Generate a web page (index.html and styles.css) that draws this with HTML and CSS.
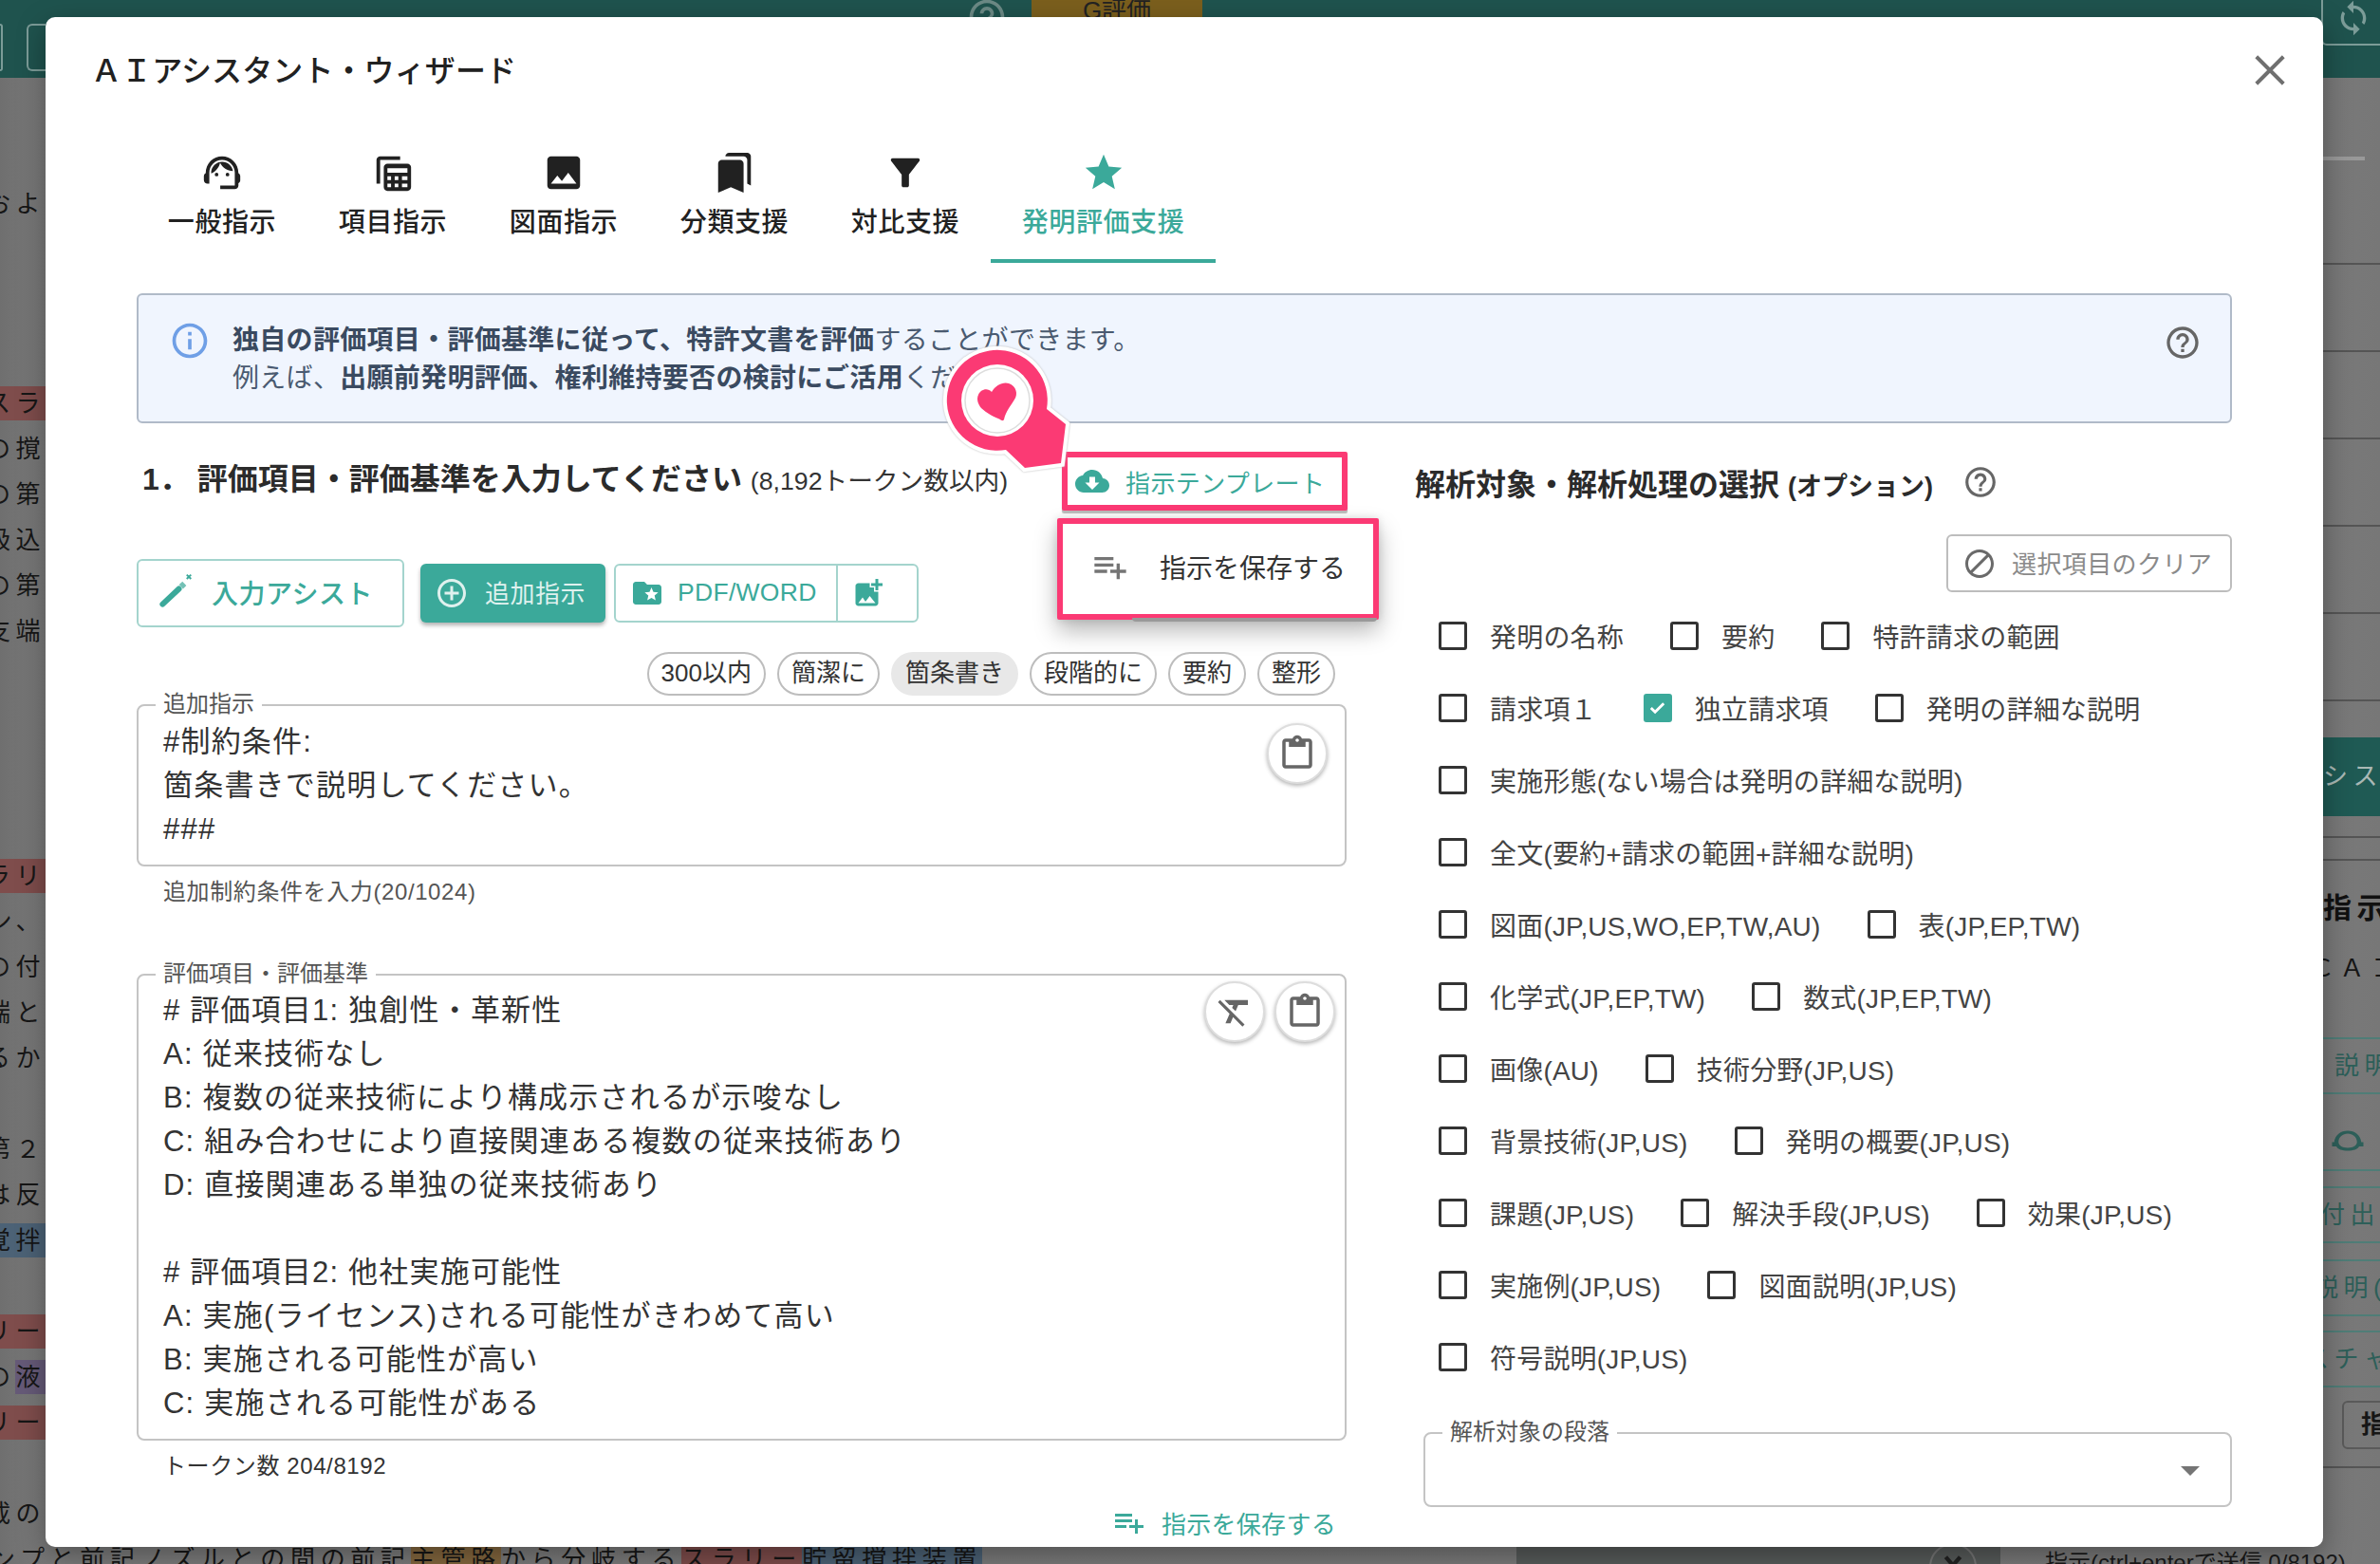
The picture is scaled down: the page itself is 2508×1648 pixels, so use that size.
FILE: index.html
```html
<!DOCTYPE html>
<html lang="ja">

<head>
    <meta charset="UTF-8" />
    <title>AIアシスタント・ウィザード</title>
    <link rel="stylesheet" href="styles.css">
</head>

<body>

    <!-- page behind the dialog -->
    <div class="page">
        <div class="topbar">
            <div class="top-left">
                <span class="top-box"></span>
                <span class="top-box second"></span>
            </div>
            <div class="top-mid">
                <svg class="top-help" viewBox="0 0 24 24"><use href="#i-help" /></svg>
                <span class="top-tag">G評価</span>
            </div>
            <div class="top-right">
                <svg class="top-sync" viewBox="0 0 24 24"><path d="M12 4V1L8 5l4 4V6c3.31 0 6 2.69 6 6 0 1.01-.25 1.97-.7 2.8l1.46 1.46C19.54 15.03 20 13.57 20 12c0-4.42-3.58-8-8-8zm0 14c-3.31 0-6-2.69-6-6 0-1.01.25-1.97.7-2.8L5.24 7.74C4.46 8.97 4 10.43 4 12c0 4.42 3.58 8 8 8v3l4-4-4-4v3z" /></svg>
            </div>
        </div>
        <div class="under">
            <div class="left-text">
                <div class="ln first">およ</div>
                <div class="ln gap-a"><span class="hl-red">スラ</span></div>
                <div class="ln">の撹</div>
                <div class="ln">の第</div>
                <div class="ln">吸込</div>
                <div class="ln">の第</div>
                <div class="ln">支端</div>
                <div class="ln gap-b"><span class="hl-red">ラリ</span></div>
                <div class="ln">ン、</div>
                <div class="ln">の付</div>
                <div class="ln">端と</div>
                <div class="ln">るか</div>
                <div class="ln gap-c">第２</div>
                <div class="ln">は反</div>
                <div class="ln"><span class="hl-blue">覚拌</span></div>
                <div class="ln gap-c"><span class="hl-red">リー</span></div>
                <div class="ln">の<span class="hl-purple">液</span></div>
                <div class="ln"><span class="hl-red">リー</span></div>
                <div class="ln gap-c">載の</div>
                <div class="ln bottom-line">ンプと前記ノズルとの間の前記<span class="hl-orange">主管路</span>から分岐する<span class="hl-red">スラリー</span><span class="hl-blue">貯留撹拌装置</span></div>
            </div>
            <div class="right-text">
                <div class="rule r-short"></div>
                <div class="rule r-first"></div>
                <div class="rule r-92"></div>
                <div class="rule r-92"></div>
                <div class="rule r-92"></div>
                <div class="rule r-92"></div>
                <div class="rule r-92"></div>
                <div class="assist-bar">システム</div>
                <div class="rule r-21"></div>
                <div class="rule r-24"></div>
                <div class="r-title">指示で</div>
                <div class="r-sub">ＣＡＩ</div>
                <div class="r-cell c-a">説明</div>
                <div class="r-cell-icon">
                    <svg viewBox="0 0 24 24"><path d="M12 5C7 5 3 8 2.500 13H1v3h3c1 2 4 3 8 3s7-1 8-3h3v-3h-1.500C21 8 17 5 12 5zm0 2c3.500 0 6.500 2.300 6.500 6 0 2-2.500 4-6.500 4s-6.500-2-6.500-4c0-3.700 3-6 6.500-6z" /></svg>
                </div>
                <div class="r-cell c-b">付出力</div>
                <div class="r-cell c-c">説明(日</div>
                <div class="r-cell c-d">スチャ</div>
                <div class="r-btn">指</div>
                <div class="rule r-last"></div>
            </div>
        </div>
        <div class="page-foot">
            <div class="foot-dark"><span class="foot-circle"><svg viewBox="0 0 24 24"><path d="M5 8l7 8 7-8" /></svg></span></div>
            <div class="foot-hint">指示(ctrl+enterで送信 0/8192)</div>
        </div>
    </div>

    <!-- dialog -->
    <div class="modal">
        <div class="modal-title">ＡＩアシスタント・ウィザード</div>
        <svg class="close" viewBox="0 0 24 24"><path d="M3 3l18 18M21 3L3 21" /></svg>

        <div class="tabs">
            <div class="tab">
                <svg viewBox="0 0 24 24"><path d="M21 12.220C21 6.730 16.740 3 12 3c-4.690 0-9 3.650-9 9.280-.6.340-1 .98-1 1.720v2c0 1.100.9 2 2 2h1v-6.100c0-3.870 3.130-7 7-7s7 3.130 7 7V19h-8v2h8c1.100 0 2-.9 2-2v-1.220c.59-.31 1-.92 1-1.640v-2.300c0-.7-.41-1.310-1-1.620z" /><circle cx="9" cy="13" r="1" /><circle cx="15" cy="13" r="1" /><path d="M18 11.030C17.520 8.180 15.040 6 12.050 6c-3.030 0-6.290 2.510-6.030 6.450 2.470-1.010 4.330-3.210 4.860-5.890 1.310 2.630 4 4.440 7.120 4.470z" /></svg>
                <span>一般指示</span>
            </div>
            <div class="tab">
                <svg viewBox="0 0 24 24"><path d="M3 3h13v2H5v13H3V5c0-1.100.9-2 2-2z" /><path fill-rule="evenodd" d="M9 7h11c1.100 0 2 .9 2 2v11c0 1.100-.9 2-2 2H9c-1.100 0-2-.9-2-2V9c0-1.100.9-2 2-2zm0 2.500v2.500h11V9.500H9zM9 14v2h2v-2H9zm4 0v2h2v-2h-2zm4 0v2h3v-2h-3zM9 18v2h2v-2H9zm4 0v2h2v-2h-2zm4 0v2h3v-2h-3z" /></svg>
                <span>項目指示</span>
            </div>
            <div class="tab">
                <svg viewBox="0 0 24 24"><path d="M21 19V5c0-1.100-.9-2-2-2H5c-1.100 0-2 .9-2 2v14c0 1.100.9 2 2 2h14c1.100 0 2-.9 2-2zM8.500 13.500l2.500 3.010L14.500 12l4.500 6H5l3.500-4.500z" /></svg>
                <span>図面指示</span>
            </div>
            <div class="tab">
                <svg viewBox="0 0 24 24"><path d="M19 18l2 1V3c0-1.100-.9-2-2-2H8.990C7.890 1 7 1.900 7 3h10c1.100 0 2 .9 2 2v13zM15 5H5c-1.100 0-2 .9-2 2v16l7-3 7 3V7c0-1.100-.9-2-2-2z" /></svg>
                <span>分類支援</span>
            </div>
            <div class="tab">
                <svg viewBox="0 0 24 24"><path d="M4.250 5.610C6.270 8.200 10 13 10 13v6c0 .55.45 1 1 1h2c.55 0 1-.45 1-1v-6s3.720-4.800 5.740-7.390c.51-.66.04-1.610-.79-1.610H5.040c-.83 0-1.300.95-.79 1.610z" /></svg>
                <span>対比支援</span>
            </div>
            <div class="tab active">
                <svg viewBox="0 0 24 24"><path d="M12 17.270L18.180 21l-1.640-7.030L22 9.240l-7.190-.61L12 2 9.190 8.630 2 9.240l5.460 4.730L5.820 21z" /></svg>
                <span>発明評価支援</span>
            </div>
        </div>

        <div class="modal-body">
            <div class="info">
                <svg class="info-icon" viewBox="0 0 24 24"><path d="M11 7h2v2h-2zm0 4h2v6h-2zm1-9C6.480 2 2 6.480 2 12s4.480 10 10 10 10-4.480 10-10S17.520 2 12 2zm0 18c-4.410 0-8-3.590-8-8s3.590-8 8-8 8 3.590 8 8-3.590 8-8 8z" /></svg>
                <div class="info-text">
                    <div><b>独自の評価項目・評価基準に従って、特許文書を評価</b>することができます。</div>
                    <div>例えば、<b>出願前発明評価、権利維持要否の検討にご活用</b>ください。</div>
                </div>
                <svg class="info-help" viewBox="0 0 24 24"><use href="#i-help" /></svg>
            </div>

            <div class="columns">
                <div class="col-left">
                    <div class="head-row">
                        <div class="head-title"><span class="head-num">1．</span>評価項目・評価基準を入力してください <small>(8,192トークン数以内)</small></div>
                        <div class="template-btn pink-box">
                            <svg viewBox="0 0 24 24"><path d="M19.350 10.040C18.670 6.590 15.640 4 12 4 9.110 4 6.600 5.640 5.350 8.040 2.340 8.360 0 10.910 0 14c0 3.310 2.690 6 6 6h13c2.760 0 5-2.240 5-5 0-2.640-2.050-4.780-4.650-4.960zM17 13l-5 5-5-5h3V9h4v4h3z" /></svg>
                            <span>指示テンプレート</span>
                        </div>
                    </div>

                    <div class="tool-row">
                        <div class="btn-assist">
                            <svg viewBox="0 0 24 24"><path class="wand" d="M2.500 19.200L12.300 10" /><path class="wand-tip" d="M13.600 8.700L15.600 6.800" /><path class="spark" d="M17 1.500l2.600 2.500M19.600 1.500L17 4" /></svg>
                            <span>入力アシスト</span>
                        </div>
                        <div class="btn-add">
                            <svg viewBox="0 0 24 24"><path d="M13 7h-2v4H7v2h4v4h2v-4h4v-2h-4V7zm-1-5C6.480 2 2 6.480 2 12s4.480 10 10 10 10-4.480 10-10S17.520 2 12 2zm0 18c-4.410 0-8-3.590-8-8s3.590-8 8-8 8 3.590 8 8-3.590 8-8 8z" /></svg>
                            <span>追加指示</span>
                        </div>
                        <div class="btn-group">
                            <div class="btn-file">
                                <svg viewBox="0 0 24 24"><path d="M20 6h-8l-2-2H4c-1.100 0-1.990.9-1.990 2L2 18c0 1.100.9 2 2 2h16c1.100 0 2-.9 2-2V8c0-1.100-.9-2-2-2zm-2.060 11L15 15.280 12.060 17l.78-3.330-2.590-2.240 3.410-.29L15 8l1.340 3.140 3.410.29-2.590 2.240.78 3.330z" /></svg>
                                <span>PDF/WORD</span>
                            </div>
                            <div class="btn-image">
                                <svg viewBox="0 0 24 24"><path d="M19 7v2.990s-1.990.01-2 0V7h-3s.01-1.990 0-2h3V2h2v3h3v2h-3zm-3 4V8h-3V5H5c-1.100 0-2 .9-2 2v12c0 1.100.9 2 2 2h12c1.100 0 2-.9 2-2v-8h-3zM5 19l3-4 2 3 3-4 4 5H5z" /></svg>
                            </div>
                        </div>
                    </div>

                    <div class="chips">
                        <span class="chip">300以内</span>
                        <span class="chip">簡潔に</span>
                        <span class="chip chip-on">箇条書き</span>
                        <span class="chip">段階的に</span>
                        <span class="chip">要約</span>
                        <span class="chip">整形</span>
                    </div>

                    <div class="field field-extra">
                        <label class="field-label">追加指示</label>
                        <div class="field-text">
                            <div>#制約条件:</div>
                            <div>箇条書きで説明してください。</div>
                            <div>###</div>
                        </div>
                        <span class="round-btn rb-extra"><svg viewBox="0 0 24 24"><use href="#i-paste" /></svg></span>
                    </div>
                    <div class="helper">追加制約条件を入力(20/1024)</div>

                    <div class="field field-criteria">
                        <label class="field-label">評価項目・評価基準</label>
                        <div class="field-text">
                            <div># 評価項目1: 独創性・革新性</div>
                            <div>A: 従来技術なし</div>
                            <div>B: 複数の従来技術により構成示されるが示唆なし</div>
                            <div>C: 組み合わせにより直接関連ある複数の従来技術あり</div>
                            <div>D: 直接関連ある単独の従来技術あり</div>
                            <div>&nbsp;</div>
                            <div># 評価項目2: 他社実施可能性</div>
                            <div>A: 実施(ライセンス)される可能性がきわめて高い</div>
                            <div>B: 実施される可能性が高い</div>
                            <div>C: 実施される可能性がある</div>
                        </div>
                        <span class="round-btn rb-clear"><svg viewBox="0 0 24 24"><path d="M3.270 5L2 6.270l6.970 6.970L6.500 19h3l1.570-3.660L16.730 21 18 19.730 3.550 5.270 3.270 5zM6 5v.18L8.820 8h2.400l-.72 1.680 2.100 2.100L14.210 8H20V5H6z" /></svg></span>
                        <span class="round-btn rb-paste"><svg viewBox="0 0 24 24"><use href="#i-paste" /></svg></span>
                    </div>
                    <div class="helper dark">トークン数 204/8192</div>

                    <div class="save-row">
                        <svg viewBox="0 0 24 24"><use href="#i-playlist" /></svg>
                        <span>指示を保存する</span>
                    </div>
                </div>

                <div class="col-right">
                    <div class="right-head">
                        <div class="right-title">解析対象・解析処理の選択 <small>(オプション)</small></div>
                        <svg viewBox="0 0 24 24"><use href="#i-help" /></svg>
                    </div>
                    <div class="clear-row">
                        <div class="btn-clear">
                            <svg viewBox="0 0 24 24"><path d="M12 2C6.480 2 2 6.480 2 12s4.480 10 10 10 10-4.480 10-10S17.520 2 12 2zM4 12c0-4.420 3.580-8 8-8 1.850 0 3.550.63 4.900 1.690L5.690 16.900C4.630 15.550 4 13.850 4 12zm8 8c-1.850 0-3.550-.63-4.900-1.690L18.310 7.100C19.370 8.450 20 10.150 20 12c0 4.420-3.580 8-8 8z" /></svg>
                            <span>選択項目のクリア</span>
                        </div>
                    </div>
                    <div class="checks">
                        <div class="check-row">
                            <label class="check"><i></i>発明の名称</label>
                            <label class="check"><i></i>要約</label>
                            <label class="check"><i></i>特許請求の範囲</label>
                        </div>
                        <div class="check-row">
                            <label class="check"><i></i>請求項１</label>
                            <label class="check"><i class="on"><svg viewBox="0 0 24 24"><path d="M5 12.500l4.500 4.500L19 7.500" /></svg></i>独立請求項</label>
                            <label class="check"><i></i>発明の詳細な説明</label>
                        </div>
                        <div class="check-row">
                            <label class="check"><i></i>実施形態(ない場合は発明の詳細な説明)</label>
                        </div>
                        <div class="check-row">
                            <label class="check"><i></i>全文(要約+請求の範囲+詳細な説明)</label>
                        </div>
                        <div class="check-row">
                            <label class="check"><i></i>図面(JP,US,WO,EP,TW,AU)</label>
                            <label class="check"><i></i>表(JP,EP,TW)</label>
                        </div>
                        <div class="check-row">
                            <label class="check"><i></i>化学式(JP,EP,TW)</label>
                            <label class="check"><i></i>数式(JP,EP,TW)</label>
                        </div>
                        <div class="check-row">
                            <label class="check"><i></i>画像(AU)</label>
                            <label class="check"><i></i>技術分野(JP,US)</label>
                        </div>
                        <div class="check-row">
                            <label class="check"><i></i>背景技術(JP,US)</label>
                            <label class="check"><i></i>発明の概要(JP,US)</label>
                        </div>
                        <div class="check-row">
                            <label class="check"><i></i>課題(JP,US)</label>
                            <label class="check"><i></i>解決手段(JP,US)</label>
                            <label class="check"><i></i>効果(JP,US)</label>
                        </div>
                        <div class="check-row">
                            <label class="check"><i></i>実施例(JP,US)</label>
                            <label class="check"><i></i>図面説明(JP,US)</label>
                        </div>
                        <div class="check-row">
                            <label class="check"><i></i>符号説明(JP,US)</label>
                        </div>
                    </div>
                    <div class="select-box">
                        <label class="field-label">解析対象の段落</label>
                        <span class="select-arrow"></span>
                    </div>
                </div>
            </div>
        </div>

        <!-- popup menu opened from the template button -->
        <div class="menu pink-box">
            <svg viewBox="0 0 24 24"><use href="#i-playlist" /></svg>
            <span>指示を保存する</span>
        </div>
    </div>

    <!-- pink callout pin -->
    <svg class="pin" viewBox="0 0 140 140">
        <path class="pin-body" d="M106 66L126 82L121 123L83 128L63 109A53 53 0 1 1 106 66Z" />
        <circle class="pin-hole" cx="54" cy="57" r="38" />
        <circle class="pin-ring" cx="54" cy="57" r="34" />
        <path class="pin-heart" d="M48 48C52 41 60 37 66 39C74 42 76 50 72 56C68 63 63 68 61 77C60 79 58 78 57 77C52 75 42 70 37 65C33 60 32 55 34 51C36 45 44 43 48 48Z" />
    </svg>

    <svg class="defs" width="0" height="0">
        <defs>
            <symbol id="i-help" viewBox="0 0 24 24"><path d="M11 18h2v-2h-2v2zm1-16C6.480 2 2 6.480 2 12s4.480 10 10 10 10-4.480 10-10S17.520 2 12 2zm0 18c-4.410 0-8-3.590-8-8s3.590-8 8-8 8 3.590 8 8-3.590 8-8 8zm0-14c-2.210 0-4 1.790-4 4h2c0-1.100.9-2 2-2s2 .9 2 2c0 2-3 1.750-3 5h2c0-2.250 3-2.500 3-5 0-2.210-1.790-4-4-4z" /></symbol>
            <symbol id="i-paste" viewBox="0 0 24 24"><path d="M19 3h-4.180C14.400 1.840 13.300 1 12 1c-1.300 0-2.400.84-2.820 2H5c-1.100 0-2 .9-2 2v14c0 1.100.9 2 2 2h14c1.100 0 2-.9 2-2V5c0-1.100-.9-2-2-2zm-7 0c.55 0 1 .45 1 1s-.45 1-1 1-1-.45-1-1 .45-1 1-1zm7 16H5V5h2v3h10V5h2v14z" /></symbol>
            <symbol id="i-playlist" viewBox="0 0 24 24"><path d="M14 10H2v2h12v-2zm0-4H2v2h12V6zm4 8v-4h-2v4h-4v2h4v4h2v-4h4v-2h-4zM2 16h8v-2H2v2z" /></symbol>
        </defs>
    </svg>

</body>

</html>
```

FILE: styles.css
```css
* {
    margin: 0;
    padding: 0;
    box-sizing: border-box;
    font-family: 'Liberation Sans', 'Noto Sans CJK JP', sans-serif;
}

html,
body {
    width: 2508px;
    height: 1648px;
    overflow: hidden;
}

body {
    position: relative;
    background: #777;
}

svg {
    fill: currentColor;
    flex-shrink: 0;
}

.defs {
    position: absolute;
}

/* page behind the dialog */
.page {
    width: 2508px;
    height: 1648px;
    display: flex;
    flex-direction: column;
    background: linear-gradient(to right, #6f6f6f 0, #7d7d7d 60px, #7a7a7a 2440px, #777 100%);
    color: #161616;
    overflow: hidden;
}

.topbar {
    height: 82px;
    flex-shrink: 0;
    background: #1f534e;
    display: flex;
    color: #777;
}

.top-left {
    width: 48px;
    padding-top: 25px;
    display: flex;
    gap: 25px;
}

.top-box {
    display: block;
    width: 18px;
    height: 50px;
    border: 2px solid #7c9c98;
    border-left: none;
    border-radius: 0 6px 6px 0;
}

.top-box.second {
    width: 20px;
    border-left: 2px solid #7c9c98;
    border-right: none;
    border-radius: 6px 0 0 6px;
    flex-shrink: 0;
}

.top-mid {
    margin-left: 970px;
    display: flex;
    gap: 25px;
    align-items: flex-start;
}

.top-help {
    width: 44px;
    height: 44px;
    margin-top: -4px;
    color: #6c8a86;
}

.top-tag {
    width: 180px;
    height: 18px;
    background: #7b5f1d;
    color: #222;
    font-size: 26px;
    line-height: 22px;
    text-align: center;
}

.top-right {
    margin-left: auto;
    width: 62px;
    height: 48px;
    border-left: 2px solid #7c9c98;
    border-bottom: 2px solid #7c9c98;
    border-radius: 0 0 0 6px;
}

.top-sync {
    display: block;
    margin: -1px 0 0 12px;
    width: 40px;
    height: 40px;
    color: #7c9c98;
}

.under {
    flex: 1;
    display: flex;
    justify-content: space-between;
    min-height: 0;
}

.left-text,
.right-text {
    font-size: 26px;
    letter-spacing: 5.500px;
}

.left-text {
    width: 48px;
}

.ln {
    height: 36px;
    line-height: 36px;
    margin-bottom: 12px;
    white-space: nowrap;
    display: flex;
    justify-content: flex-end;
}

.ln.first {
    margin-top: 115px;
}

.gap-a {
    margin-top: 174px;
}

.gap-b {
    margin-top: 222px;
}

.gap-c {
    margin-top: 60px;
}

.bottom-line {
    justify-content: flex-start;
    width: 1100px;
    margin-left: -10px;
    height: 40px;
    letter-spacing: 5.700px;
}

.hl-red {
    background: #7f4d4c;
}

.hl-blue {
    background: #4c6276;
}

.hl-purple {
    background: #665a78;
}

.hl-orange {
    background: #85683f;
}

.right-text {
    width: 60px;
    display: flex;
    flex-direction: column;
}

.rule {
    height: 2px;
    background: #555;
    flex-shrink: 0;
}

.r-short {
    width: 44px;
    height: 4px;
    margin-top: 83px;
    background: #999;
}

.r-first {
    margin-top: 108px;
}

.r-92 {
    margin-top: 90px;
}

.r-21 {
    margin-top: 21px;
}

.r-24 {
    margin-top: 22px;
}

.r-last {
    margin-top: 18px;
}

.assist-bar {
    height: 83px;
    margin-top: 38px;
    background: #1f5a54;
    color: #a9b8b5;
    line-height: 83px;
    white-space: nowrap;
    flex-shrink: 0;
}

.r-title {
    font-size: 30px;
    line-height: 36px;
    font-weight: 700;
    color: #111;
    margin-top: 32px;
    white-space: nowrap;
}

.r-sub {
    line-height: 36px;
    margin-top: 27px;
    white-space: nowrap;
    text-indent: -14px;
}

.r-cell {
    height: 60px;
    flex-shrink: 0;
    line-height: 56px;
    color: #2d5f59;
    border-top: 2px solid #4f7d77;
    border-bottom: 2px solid #4f7d77;
    white-space: nowrap;
}

.c-a {
    margin-top: 55px;
    text-indent: 12px;
}

.c-b {
    margin-top: 16px;
    text-indent: -3px;
}

.c-c {
    margin-top: 17px;
    text-indent: -10px;
}

.c-d {
    margin-top: 15px;
    text-indent: -20px;
}

.r-cell-icon {
    height: 60px;
    flex-shrink: 0;
    margin-top: 21px;
    border-bottom: 2px solid #4f7d77;
    color: #2d5f59;
    padding: 10px 0 0 8px;
}

.r-cell-icon svg {
    width: 36px;
    height: 36px;
}

.r-btn {
    margin-top: 14px;
    margin-left: 20px;
    height: 51px;
    width: 80px;
    flex-shrink: 0;
    border: 2px solid #5a5a5a;
    border-radius: 6px;
    font-weight: 700;
    line-height: 47px;
    padding-left: 18px;
    overflow: hidden;
}

.page-foot {
    position: absolute;
    top: 1630px;
    left: 0;
    width: 2508px;
    height: 18px;
}

.foot-dark {
    position: absolute;
    left: 1598px;
    width: 510px;
    height: 18px;
    background: #585c5b;
}

.foot-circle {
    position: absolute;
    left: 435px;
    top: -4px;
    width: 50px;
    height: 50px;
    border: 2px solid #777;
    border-radius: 50%;
    padding: 4px 10px;
    color: #2a2a2a;
}

.foot-circle svg {
    fill: none;
    stroke: #222;
    stroke-width: 4;
    display: block;
    width: 26px;
    height: 26px;
}

.foot-hint {
    position: absolute;
    left: 2155px;
    top: 2px;
    font-size: 24px;
    line-height: 30px;
    color: #1a1a1a;
    white-space: nowrap;
}

/* dialog */
.modal {
    position: absolute;
    left: 48px;
    top: 18px;
    width: 2400px;
    height: 1612px;
    background: #fff;
    border-radius: 10px;
    box-shadow: 0 10px 30px rgba(0, 0, 0, 0.35);
    color: #333;
}

.modal-title {
    padding: 35px 0 0 48px;
    height: 78px;
    font-size: 32px;
    line-height: 44px;
    font-weight: 500;
    color: #212121;
    letter-spacing: 0.1px;
}

.close {
    position: absolute;
    right: 37px;
    top: 37px;
    width: 38px;
    height: 38px;
    fill: none;
    stroke: #6f6f6f;
    stroke-width: 2.500;
}

.tabs {
    display: flex;
    margin: 63px 0 0 96px;
    height: 118px;
}

.tab {
    width: 180px;
    display: flex;
    flex-direction: column;
    align-items: center;
    color: #212121;
    font-size: 28px;
    font-weight: 500;
    line-height: 40px;
    letter-spacing: 0.6px;
    white-space: nowrap;
}

.tab svg {
    width: 46px;
    height: 46px;
    margin-bottom: 10px;
}

.tab.active {
    width: 237px;
    color: #3ba99a;
    border-bottom: 4px solid #3ba99a;
}

.modal-body {
    padding: 0 96px;
}

.info {
    margin-top: 32px;
    height: 137px;
    background: #f0f5fe;
    border: 2px solid #b0bac8;
    border-radius: 6px;
    display: flex;
    padding: 28px 30px 0 32px;
    color: #4a5a70;
    font-size: 28px;
    line-height: 40px;
}

.info b {
    font-weight: 700;
    color: #3a4a60;
}

.info-icon {
    width: 44px;
    height: 44px;
    margin-top: -2px;
    color: #6f9fe6;
}

.info-text {
    margin-left: 23px;
    flex: 1;
    letter-spacing: 0.3px;
}

.info-help {
    width: 40px;
    height: 40px;
    margin-top: 2px;
    color: #666;
}

.columns {
    display: grid;
    grid-template-columns: 1275px 1fr;
    column-gap: 72px;
}

.head-row {
    margin-top: 30px;
    height: 62px;
    display: flex;
    justify-content: space-between;
    align-items: center;
}

.head-title {
    padding-left: 6px;
    padding-bottom: 11px;
    font-size: 32px;
    font-weight: 700;
    color: #2b2b2b;
    white-space: nowrap;
}

.head-num {
    margin-right: 8px;
}

.head-title small {
    font-size: 26.700px;
    font-weight: 400;
    color: #333;
}

.pink-box {
    border: 6px solid #fb3a74;
    background: #fff;
    border-radius: 2px;
}

.template-btn {
    width: 301px;
    height: 62px;
    margin-right: -1px;
    display: flex;
    align-items: center;
    padding-left: 8px;
    gap: 17px;
    color: #3ba99a;
    font-size: 26px;
    letter-spacing: 0.4px;
    box-shadow: 0 3px 1px #bbb;
}

.template-btn svg {
    width: 36px;
    height: 36px;
}

.tool-row {
    margin-top: 51px;
    height: 72px;
    display: flex;
    align-items: center;
    color: #3ba99a;
}

.btn-assist {
    width: 282px;
    height: 72px;
    border: 2px solid #a4d4cd;
    border-radius: 6px;
    display: flex;
    align-items: center;
    padding-left: 21px;
    gap: 14px;
    font-size: 28px;
    font-weight: 500;
    letter-spacing: 0.5px;
    padding-bottom: 2px;
}

.btn-assist svg {
    width: 42px;
    height: 42px;
    fill: none;
    stroke: #3ba99a;
}

.wand {
    stroke-width: 3.400;
    stroke-linecap: round;
}

.wand-tip {
    stroke-width: 3.400;
    stroke: #74c1b6;
}

.spark {
    stroke-width: 1.100;
}

.btn-add {
    margin-left: 17px;
    width: 195px;
    height: 62px;
    background: #3ba99a;
    color: #dff1ee;
    border-radius: 6px;
    box-shadow: 0 3px 4px rgba(0, 0, 0, 0.3);
    display: flex;
    align-items: center;
    padding: 0 0 4px 15px;
    gap: 17px;
    font-size: 26px;
    letter-spacing: 0.5px;
}

.btn-add svg {
    width: 36px;
    height: 36px;
    margin-top: 4px;
}

.btn-group {
    margin-left: 9px;
    width: 321px;
    height: 62px;
    border: 2px solid #a4d4cd;
    border-radius: 6px;
    display: flex;
}

.btn-file {
    width: 234px;
    border-right: 2px solid #a4d4cd;
    display: flex;
    align-items: center;
    padding: 0 0 2px 15px;
    gap: 14px;
    font-size: 26.500px;
    letter-spacing: 0.3px;
}

.btn-file svg {
    width: 36px;
    height: 36px;
    margin-top: 2px;
}

.btn-image {
    flex: 1;
    display: flex;
    align-items: center;
    padding-left: 14px;
}

.btn-image svg {
    width: 36px;
    height: 36px;
}

.chips {
    margin-top: 26px;
    margin-right: 12px;
    height: 46px;
    display: flex;
    justify-content: flex-end;
    gap: 12px;
}

.chip {
    height: 46px;
    padding: 0 13px;
    border: 2px solid #bdbdbd;
    border-radius: 24px;
    font-size: 26px;
    line-height: 40px;
    color: #333;
    white-space: nowrap;
}

.chip-on {
    background: #e8e8e8;
    border-color: #e8e8e8;
}

.field {
    position: relative;
    border: 2px solid #c4c4c4;
    border-radius: 8px;
    margin-top: 9px;
}

.field-extra {
    height: 171px;
}

.field-criteria {
    height: 492px;
    margin-top: 74px;
}

.field-label {
    position: absolute;
    top: -14px;
    left: 18px;
    padding: 0 8px;
    background: #fff;
    font-size: 24px;
    line-height: 24px;
    color: #555;
    white-space: nowrap;
}

.field-text {
    padding: 14px 0 0 26px;
    font-size: 31px;
    line-height: 46px;
    color: #333;
    letter-spacing: 1.200px;
    white-space: nowrap;
}

.field-extra .field-text {
    padding-top: 15px;
}

.round-btn {
    position: absolute;
    width: 64px;
    height: 64px;
    border-radius: 50%;
    background: #fff;
    border: 2px solid #ddd;
    box-shadow: 0 2px 4px rgba(0, 0, 0, 0.3);
    display: flex;
    align-items: center;
    justify-content: center;
    color: #666;
}

.round-btn svg {
    width: 42px;
    height: 42px;
}

.rb-extra {
    top: 18px;
    right: 18px;
}

.rb-clear {
    top: 6px;
    right: 84px;
}

.rb-paste {
    top: 6px;
    right: 10px;
}

.helper {
    margin-top: 15px;
    padding-left: 28px;
    font-size: 24px;
    line-height: 24px;
    color: #555;
    letter-spacing: 0.6px;
}

.helper.dark {
    color: #333;
}

.save-row {
    margin-top: 27px;
    margin-right: 11px;
    height: 40px;
    display: flex;
    justify-content: flex-end;
    align-items: center;
    gap: 16px;
    font-size: 26px;
    letter-spacing: 0.3px;
    color: #3ba99a;
}

.save-row svg {
    width: 36px;
    height: 36px;
}

/* right column */
.right-head {
    margin-top: 42px;
    height: 40px;
    display: flex;
    align-items: center;
    gap: 31px;
    color: #666;
}

.right-head svg {
    width: 38px;
    height: 38px;
}

.right-title {
    font-size: 32px;
    font-weight: 700;
    color: #2b2b2b;
    white-space: nowrap;
}

.right-title small {
    font-size: 27px;
}

.clear-row {
    margin-top: 35px;
    display: flex;
    justify-content: flex-end;
}

.btn-clear {
    width: 301px;
    height: 61px;
    border: 2px solid #bdbdbd;
    border-radius: 6px;
    display: flex;
    align-items: center;
    padding: 0 0 2px 15px;
    gap: 16px;
    color: #8a8a8a;
    font-size: 26px;
    letter-spacing: 0.4px;
}

.btn-clear svg {
    width: 36px;
    height: 36px;
    margin-top: 2px;
    color: #6a6a6a;
}

.checks {
    margin-top: 8px;
    padding-left: 25px;
}

.check-row {
    height: 76px;
    display: flex;
    align-items: center;
    gap: 49px;
}

.check {
    display: flex;
    align-items: center;
    gap: 24px;
    font-size: 28px;
    letter-spacing: 0.2px;
    color: #444;
    white-space: nowrap;
}

.check i {
    width: 30px;
    height: 30px;
    border: 3.500px solid #333;
    border-radius: 3px;
    display: block;
}

.check i.on {
    background: #3ba99a;
    border-color: #3ba99a;
    color: #fff;
}

.check i.on svg {
    display: block;
    width: 23px;
    height: 23px;
    fill: none;
    stroke: #fff;
    stroke-width: 3;
}

.select-box {
    position: relative;
    margin-top: 41px;
    margin-left: 9px;
    height: 79px;
    border: 2px solid #c4c4c4;
    border-radius: 8px;
}

.select-arrow {
    position: absolute;
    right: 32px;
    top: 34px;
    border-left: 10px solid transparent;
    border-right: 10px solid transparent;
    border-top: 10px solid #757575;
}

/* popup menu and the gray edge of the button hidden under it */
.menu {
    position: absolute;
    left: 1066px;
    top: 528px;
    width: 339px;
    height: 107px;
    display: flex;
    align-items: center;
    padding: 0 0 6px 30px;
    gap: 32px;
    font-size: 28px;
    color: #333;
    box-shadow: 0 12px 24px rgba(0, 0, 0, 0.28), 0 0 8px rgba(0, 0, 0, 0.12);
}

.menu svg {
    width: 40px;
    height: 40px;
    color: #757575;
}

.menu::after {
    content: "";
    position: absolute;
    left: 73px;
    right: -4px;
    bottom: -8px;
    height: 4px;
    background: #999;
    border-radius: 0 0 4px 4px;
}

/* callout */
.pin {
    position: absolute;
    left: 997px;
    top: 365px;
    width: 140px;
    height: 140px;
    overflow: visible;
}

.pin-body {
    fill: #fb3a74;
    stroke: #fff;
    stroke-width: 8;
    stroke-linejoin: miter;
    paint-order: stroke;
    filter: drop-shadow(0 0 1px #bbb);
}

.pin-hole {
    fill: #fff;
}

.pin-ring {
    fill: none;
    stroke: #ddd;
    stroke-width: 1.500;
}

.pin-heart {
    fill: #fb3a74;
}
```
